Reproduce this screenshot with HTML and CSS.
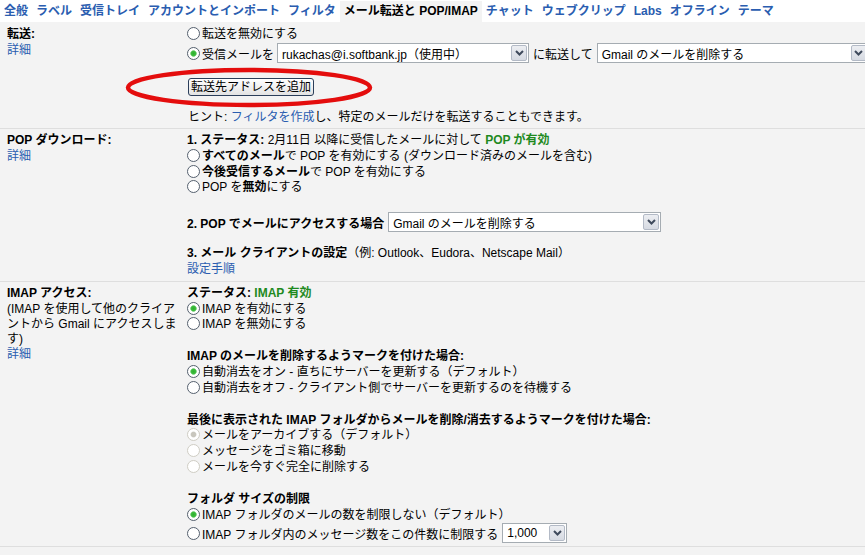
FILE: index.html
```html
<!DOCTYPE html>
<html lang="ja">
<head>
<meta charset="utf-8">
<title>設定 - メール転送と POP/IMAP</title>
<link rel="stylesheet" href="styles.css">
</head>
<body>
<nav class="tabs">
  <a class="tab" href="#">全般</a>
  <a class="tab" href="#">ラベル</a>
  <a class="tab" href="#">受信トレイ</a>
  <a class="tab" href="#">アカウントとインポート</a>
  <a class="tab" href="#">フィルタ</a>
  <span class="tab active">メール転送と POP/IMAP</span>
  <a class="tab" href="#">チャット</a>
  <a class="tab" href="#">ウェブクリップ</a>
  <a class="tab" href="#">Labs</a>
  <a class="tab" href="#">オフライン</a>
  <a class="tab" href="#">テーマ</a>
</nav>

<main class="settings">
  <section class="row row-fwd">
    <div class="label">
      <div class="line"><b>転送:</b></div>
      <div class="line"><a href="#">詳細</a></div>
    </div>
    <div class="value">
      <div class="line"><input type="radio" class="radio" name="fwd">転送を無効にする</div>
      <div class="selrow">
        <input type="radio" class="radio" name="fwd" checked>
        <span>受信メールを</span>
        <span class="select sel-addr"><span class="sel-text">rukachas@i.softbank.jp（使用中）</span><span class="sel-btn"><svg width="9" height="6" viewBox="0 0 9 6"><path d="M1 1 L4.5 4.5 L8 1" fill="none" stroke="#3f4a5c" stroke-width="2"/></svg></span></span>
        <span class="sep">に転送して</span>
        <span class="select sel-act"><span class="sel-text">Gmail のメールを削除する</span><span class="sel-btn"><svg width="9" height="6" viewBox="0 0 9 6"><path d="M1 1 L4.5 4.5 L8 1" fill="none" stroke="#3f4a5c" stroke-width="2"/></svg></span></span>
      </div>
      <div class="btnwrap">
        <button class="btn" type="button">転送先アドレスを追加</button>
        <svg class="circle" width="250" height="42" viewBox="0 0 250 42"><ellipse cx="124" cy="20.5" rx="121" ry="17.5" fill="none" stroke="#e40d0d" stroke-width="4.5"/></svg>
      </div>
      <div class="line hint">ヒント: <a href="#">フィルタを作成</a>し、特定のメールだけを転送することもできます。</div>
    </div>
  </section>

  <section class="row">
    <div class="label">
      <div class="line"><b>POP ダウンロード:</b></div>
      <div class="line"><a href="#">詳細</a></div>
    </div>
    <div class="value">
      <div class="line"><b>1. ステータス:</b> 2月11日 以降に受信したメールに対して <b class="green">POP が有効</b></div>
      <div class="line"><input type="radio" class="radio" name="pop"><b>すべてのメール</b>で POP を有効にする (ダウンロード済みのメールを含む)</div>
      <div class="line"><input type="radio" class="radio" name="pop"><b>今後受信するメール</b>で POP を有効にする</div>
      <div class="line"><input type="radio" class="radio" name="pop">POP を<b>無効</b>にする</div>
      <div class="spacer"></div>
      <div class="selrow short">
        <b>2. POP でメールにアクセスする場合</b>
        <span class="select sel-pop"><span class="sel-text">Gmail のメールを削除する</span><span class="sel-btn"><svg width="9" height="6" viewBox="0 0 9 6"><path d="M1 1 L4.5 4.5 L8 1" fill="none" stroke="#3f4a5c" stroke-width="2"/></svg></span></span>
      </div>
      <div class="line gap"><b>3. メール クライアントの設定</b>（例: Outlook、Eudora、Netscape Mail）</div>
      <div class="line"><a href="#">設定手順</a></div>
    </div>
  </section>

  <section class="row">
    <div class="label">
      <div class="line"><b>IMAP アクセス:</b></div>
      <div class="desc">
        <div class="line">(IMAP を使用して他のクライア</div>
        <div class="line">ントから Gmail にアクセスしま</div>
        <div class="line">す)</div>
      </div>
      <div class="line"><a href="#">詳細</a></div>
    </div>
    <div class="value">
      <div class="line"><b>ステータス: <span class="green">IMAP 有効</span></b></div>
      <div class="line"><input type="radio" class="radio" name="imap" checked>IMAP を有効にする</div>
      <div class="line"><input type="radio" class="radio" name="imap">IMAP を無効にする</div>
      <div class="spacer"></div>
      <div class="line"><b>IMAP のメールを削除するようマークを付けた場合:</b></div>
      <div class="line"><input type="radio" class="radio" name="exp" checked>自動消去をオン - 直ちにサーバーを更新する（デフォルト）</div>
      <div class="line"><input type="radio" class="radio" name="exp">自動消去をオフ - クライアント側でサーバーを更新するのを待機する</div>
      <div class="spacer"></div>
      <div class="line"><b>最後に表示された IMAP フォルダからメールを削除/消去するようマークを付けた場合:</b></div>
      <div class="line"><input type="radio" class="radio" name="del" checked disabled>メールをアーカイブする（デフォルト）</div>
      <div class="line"><input type="radio" class="radio" name="del" disabled>メッセージをゴミ箱に移動</div>
      <div class="line"><input type="radio" class="radio" name="del" disabled>メールを今すぐ完全に削除する</div>
      <div class="spacer"></div>
      <div class="line"><b>フォルダ サイズの制限</b></div>
      <div class="line"><input type="radio" class="radio" name="lim" checked>IMAP フォルダのメールの数を制限しない（デフォルト）</div>
      <div class="selrow short">
        <input type="radio" class="radio" name="lim">
        <span>IMAP フォルダ内のメッセージ数をこの件数に制限する</span>
        <span class="select sel-num"><span class="sel-text">1,000</span><span class="sel-btn"><svg width="9" height="6" viewBox="0 0 9 6"><path d="M1 1 L4.5 4.5 L8 1" fill="none" stroke="#3f4a5c" stroke-width="2"/></svg></span></span>
      </div>
    </div>
  </section>
</main>
</body>
</html>
```

FILE: styles.css
```css
html {
  overflow: hidden;
}

body {
  margin: 0;
  background: #f3f3f3;
  color: #000;
  font-family: "Liberation Sans", "Noto Sans CJK JP", sans-serif;
  font-size: 12px;
}

a {
  color: #2a5db0;
  text-decoration: none;
}

b {
  font-weight: bold;
}

.tabs {
  display: flex;
  align-items: flex-end;
  height: 22px;
  background: #fff;
  white-space: nowrap;
}

.tab {
  display: block;
  padding: 2px 4px 3px;
  line-height: 16px;
  font-weight: bold;
}

.tab.active {
  background: #f3f3f3;
  color: #000;
}

.row {
  display: grid;
  grid-template-columns: 187px 1fr;
  padding: 4px 0 3px;
  border-bottom: 1px solid #dedede;
}

.row-fwd {
  padding: 5px 0 2px;
}

.label {
  padding-left: 7px;
}

.desc .line {
  height: 15.2px;
  line-height: 15.2px;
}

.line {
  height: 15.8px;
  line-height: 15.8px;
  white-space: nowrap;
}

.spacer {
  height: 16px;
}

.gap {
  margin-top: 14px;
}

.green {
  color: #1e8a1e;
  font-weight: bold;
}

.radio {
  -webkit-appearance: none;
  appearance: none;
  box-sizing: border-box;
  width: 13px;
  height: 13px;
  margin: 0 2px 0 0;
  border: 1px solid #55606e;
  border-radius: 50%;
  background: #fff;
  vertical-align: -2px;
}

.radio:checked {
  background: radial-gradient(circle, #2fae2f 0, #3cbc3c 2.2px, #8fd88f 3px, #fff 3.6px);
}

.radio:disabled {
  border-color: #cfcdc4;
}

.radio:disabled:checked {
  background: radial-gradient(circle, #c8c6bd 0, #c8c6bd 2.2px, #fff 3.4px);
}

.selrow {
  display: flex;
  align-items: center;
  height: 21px;
  white-space: nowrap;
}

.selrow.short {
  height: 20px;
}

.selrow .radio {
  margin-top: 1px;
}

.select {
  display: inline-flex;
  align-items: center;
  justify-content: space-between;
  box-sizing: border-box;
  height: 20px;
  padding: 0 1px 0 4px;
  border: 1px solid #a5acb2;
  background: #fff;
  font-size: 12px;
  color: #000;
}

.sel-btn {
  display: flex;
  align-items: center;
  justify-content: center;
  box-sizing: border-box;
  width: 16px;
  height: 16px;
  border: 1px solid #b3bac6;
  border-radius: 2px;
  background: linear-gradient(#eceef2, #d6dae2);
}

.sel-addr {
  width: 252px;
  margin-left: 3px;
}

.sep {
  margin: 0 4px;
}

.sel-act {
  width: 272px;
  flex: none;
}

.sel-pop {
  width: 273px;
  margin-left: 4px;
}

.sel-num {
  width: 65px;
  margin-left: 4px;
}

.btnwrap {
  position: relative;
  margin-top: 14px;
  height: 18px;
}

.btn {
  box-sizing: border-box;
  height: 18px;
  margin: 0 0 0 1px;
  padding: 0 2px;
  border: 1px solid #2b3e5a;
  border-radius: 3px;
  background: linear-gradient(#ffffff, #e3e3e3);
  font-family: "Liberation Sans", "Noto Sans CJK JP", sans-serif;
  font-size: 12px;
  line-height: 14px;
  color: #000;
}

.circle {
  position: absolute;
  left: -62px;
  top: -11px;
}

.hint {
  margin-top: 14.5px;
  padding-left: 1px;
}
```
